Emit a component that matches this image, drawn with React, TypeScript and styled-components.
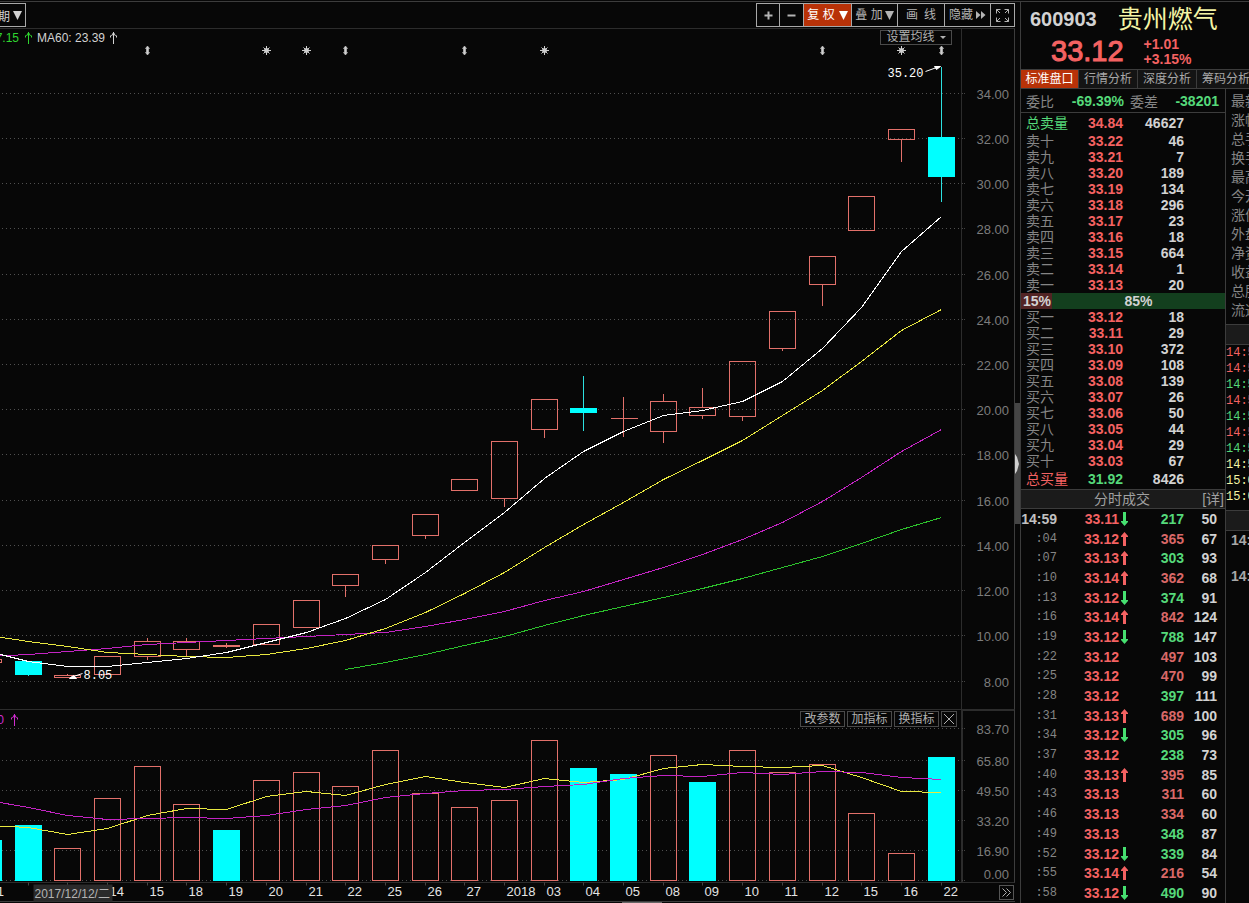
import React from "react";
import styled, { createGlobalStyle } from "styled-components";

const C = {
  bg: "#070707",
  line: "#3c3c3c",
  faint: "#2c2c2c",
  frame: "#a8a8a8",
  red: "#f46262",
  redSoft: "#d96868",
  candle: "#e2706a",
  green: "#55d97a",
  cyan: "#00ffff",
  label: "#858585",
  white: "#d2d2d2",
  accent: "#b83208",
  strip: "#1b1b1b",
};

const SANS = `"Liberation Sans", "Noto Sans CJK SC", sans-serif`;
const MONO = `"Liberation Mono", "Noto Sans CJK SC", monospace`;

const GlobalStyle = createGlobalStyle`
  * { box-sizing: border-box; }
  body { margin: 0; background: ${C.bg}; color: ${C.white}; font-family: ${SANS}; font-size: 12px; overflow-x: hidden; }
  button { font: inherit; color: inherit; background: none; border: 0; padding: 0; margin: 0; cursor: pointer; white-space: nowrap; }
  svg { display: block; flex: none; }
`;

/* ---------- page frame ---------- */

const Page = styled.div`
  display: flex;
  min-height: 100vh;
  padding-top: 1px;
  overflow: hidden;
`;

const Main = styled.main`
  flex: 1;
  min-width: 0;
  display: flex;
  flex-direction: column;
  border-top: 1px solid ${C.line};
`;

const Splitter = styled.div`
  flex: 0 0 5px;
  display: flex;
  flex-direction: column;
  justify-content: center;
  border-top: 1px solid ${C.line};
  padding-bottom: 8px;
  padding-top: 30px;
`;

const SplitterThumb = styled.div`
  height: 121px;
  display: flex;
  align-items: center;
  background: #454545;
`;

const Panel = styled.aside`
  flex: 0 0 229px;
  overflow: hidden;
  border-left: 1px solid ${C.line};
  border-top: 1px solid ${C.line};
`;

/* ---------- toolbar ---------- */

const Toolbar = styled.header`
  display: flex;
  justify-content: space-between;
  height: 27px;
  padding-top: 1px;
  border-bottom: 1px solid ${C.faint};
`;

const PeriodButton = styled.button`
  display: flex;
  align-items: center;
  justify-content: flex-end;
  gap: 3px;
  width: 26px;
  height: 24px;
  padding-right: 3px;
  overflow: hidden;
  border: 1px solid ${C.frame};
  border-left: 0;
`;

const ToolGroup = styled.div`
  display: flex;
  height: 24px;
  border: 1px solid ${C.frame};
`;

const ToolButton = styled.button<{ $w: number; $active?: boolean; $gap?: number }>`
  display: flex;
  align-items: center;
  justify-content: center;
  gap: ${(p) => p.$gap ?? 2}px;
  width: ${(p) => p.$w}px;
  line-height: 22px;
  color: ${(p) => (p.$active ? "#fff" : "#b4b4b4")};
  background: ${(p) => (p.$active ? C.accent : "transparent")};
  & + & { border-left: 1px solid ${C.frame}; }
`;

/* ---------- chart sections ---------- */

const Section = styled.section`
  display: flex;
  border-right: 1px solid ${C.line};
  border-bottom: 1px solid ${C.faint};
`;

const Plot = styled.div`
  flex: 1;
  min-width: 0;
`;

const Axis = styled.div<{ $boxed?: boolean }>`
  flex: 0 0 53px;
  border-left: 1px solid ${C.faint};
  ${(p) => p.$boxed && `box-shadow: inset 0 1px ${C.faint}, inset 1px 0 ${C.faint};`}
`;

const LegendRow = styled.div<{ $h: number; $end: number }>`
  display: flex;
  align-items: center;
  justify-content: space-between;
  height: ${(p) => p.$h}px;
  padding-right: ${(p) => p.$end}px;
`;

const Legend = styled.div`
  display: flex;
  align-items: center;
  gap: 5px;
  padding-top: 2px;
  line-height: 14px;
  white-space: nowrap;
`;

const ClippedValue = styled.span<{ $w: number; $pad: number; $color: string }>`
  display: flex;
  justify-content: flex-end;
  width: ${(p) => p.$w}px;
  padding-right: ${(p) => p.$pad}px;
  overflow: hidden;
  color: ${(p) => p.$color};
`;

const SmallButtons = styled.div`
  display: flex;
  gap: 2px;
`;

const SmallButton = styled.button<{ $w: number; $h: number }>`
  display: flex;
  align-items: center;
  justify-content: center;
  gap: 5px;
  width: ${(p) => p.$w}px;
  height: ${(p) => p.$h}px;
  line-height: 13px;
  color: #b0b0b0;
  border: 1px solid #4a4a4a;
`;

const ChartSvg = styled.svg`
  width: 100%;
  overflow: hidden;
`;

const DateBar = styled.div`
  display: flex;
  align-items: center;
  height: 19px;
  padding-right: 1px;
  border-bottom: 1px solid ${C.line};
`;

// The end padding keeps the dates under the plot, clear of the price axis.
const DateStrip = styled.div`
  flex: 1;
  min-width: 0;
  padding-right: 38px;
`;

const DateSvg = styled(ChartSvg)`
  overflow: visible;
`;

const MoreButton = styled.button`
  display: flex;
  align-items: center;
  justify-content: center;
  width: 15px;
  height: 15px;
  border: 1px solid #555;
`;

const ScrollTrack = styled.div`
  display: flex;
  justify-content: flex-end;
  height: 1px;
  padding-right: 353px;
`;

const ScrollThumb = styled.div`
  width: 40px;
  background: #666;
`;

/* ---------- quote panel ---------- */

const QuoteHead = styled.div`
  height: 67px;
  padding: 2px 8px 0 9px;
`;

const TitleLine = styled.div`
  display: flex;
  align-items: center;
  gap: 21px;
  height: 30px;
`;

const Code = styled.span`
  font-size: 20px;
  font-weight: bold;
  line-height: 30px;
`;

const StockName = styled.h1`
  margin: 0;
  font-size: 25px;
  font-weight: normal;
  line-height: 30px;
  color: #f4f4a4;
  white-space: nowrap;
`;

const PriceLine = styled.div`
  display: flex;
  align-items: center;
  gap: 20px;
  padding-left: 21px;
  height: 34px;
  color: ${C.red};
`;

const Price = styled.strong`
  font-size: 29px;
  font-weight: normal;
  line-height: 34px;
  -webkit-text-stroke: 1px ${C.red};
`;

const Change = styled.div`
  font-size: 14px;
  font-weight: bold;
  line-height: 15px;
  padding-top: 2px;
`;

const Tabs = styled.nav`
  display: flex;
  height: 20px;
  border-top: 1px solid ${C.line};
  border-bottom: 1px solid ${C.line};
`;

const Tab = styled.button<{ $active?: boolean }>`
  flex: 0 0 59px;
  line-height: 18px;
  color: ${(p) => (p.$active ? "#fff" : "#a8a8a8")};
  background: ${(p) => (p.$active ? C.accent : "#141414")};
  border-right: 1px solid ${C.line};
  &:first-child { flex-basis: 58px; }
`;

const PanelBody = styled.div`
  display: flex;
`;

const Book = styled.div`
  flex: 0 0 205px;
  border-right: 1px solid ${C.line};
`;

const RatioLine = styled.div`
  display: grid;
  grid-template-columns: 39px 59px 41px 1fr;
  align-items: center;
  height: 24px;
  padding: 0 6px 0 5px;
  font-size: 14px;
  color: ${C.label};
  border-bottom: 1px solid ${C.line};
`;

const RatioValue = styled.span`
  font-weight: bold;
  text-align: right;
  color: ${C.green};
  & + span { padding-left: 6px; }
`;

const DataTable = styled.table`
  width: 100%;
  table-layout: fixed;
  border-collapse: collapse;
  font-size: 14px;
  line-height: 16px;
  td, th { padding: 0; overflow: visible; white-space: nowrap; }
`;

const LevelRow = styled.tr<{ $total?: boolean }>`
  height: ${(p) => (p.$total ? 20 : 16)}px;
`;

const LevelName = styled.th<{ $color?: string }>`
  font-weight: normal;
  text-align: left;
  text-indent: 5px;
  color: ${(p) => p.$color ?? C.label};
`;

const Num = styled.td<{ $color?: string }>`
  font-weight: bold;
  text-align: right;
  color: ${(p) => p.$color ?? C.white};
`;

const RatioBar = styled.div`
  display: grid;
  grid-template-columns: 31px 1fr;
  height: 16px;
  font-size: 14px;
  font-weight: bold;
  line-height: 16px;
`;

const SellShare = styled.div`
  padding-left: 2px;
  background: #522424;
`;

const BuyShare = styled.div`
  text-align: center;
  background: #133f1e;
`;

const StripHead = styled.div`
  display: grid;
  grid-template-columns: 1fr 58px 1fr;
  height: 20px;
  font-size: 14px;
  line-height: 18px;
  color: #a0a0a0;
  background: ${C.strip};
  border-top: 1px solid ${C.line};
  border-bottom: 1px solid ${C.line};
`;

const DetailButton = styled.button`
  justify-self: end;
  padding-right: 1px;
`;

const TradeTable = styled(DataTable)`
  height: 394px;
`;

const TimeCell = styled.td<{ $full?: boolean }>`
  text-align: right;
  font-family: ${(p) => (p.$full ? SANS : MONO)};
  font-size: ${(p) => (p.$full ? 14 : 12)}px;
  font-weight: ${(p) => (p.$full ? "bold" : "normal")};
  color: ${(p) => (p.$full ? "#c0c0c0" : "#858585")};
`;

const ArrowCell = styled.td`
  svg { margin-left: 2px; }
`;

const SideColumn = styled.div`
  flex: 1;
  min-width: 0;
  overflow: hidden;
  white-space: nowrap;
`;

const InfoList = styled.ul`
  list-style: none;
  margin: 0;
  padding: 3px 0 4px 5px;
  font-size: 14px;
  line-height: 19px;
  color: ${C.label};
`;

const SideStrip = styled.div`
  height: 21px;
  background: ${C.strip};
  border-top: 1px solid ${C.line};
  border-bottom: 1px solid ${C.line};
`;

const TickTimes = styled.ul`
  list-style: none;
  margin: 0;
  padding: 0 0 5px;
  font-family: ${MONO};
  font-size: 12px;
  line-height: 16px;
`;

const TickTime = styled.li<{ $color: string }>`
  color: ${(p) => p.$color};
`;

const NewsTimes = styled.ul`
  list-style: none;
  margin: 0;
  padding-left: 5px;
  font-size: 14px;
  font-weight: bold;
  line-height: 18px;
  color: #a8a8a8;
  li + li { margin-top: 18px; }
`;

/* ---------- icons ---------- */

const Caret = ({ size = 9 }: { size?: number }) => (
  <svg width={size} height={size} viewBox="0 0 9 9" aria-hidden="true">
    <path d="M0 0h9L4.5 9z" fill="currentColor" />
  </svg>
);

const SmallCaret = () => (
  <svg width="6" height="3" viewBox="0 0 6 3" aria-hidden="true">
    <path d="M0 0h6L3 3z" fill="currentColor" />
  </svg>
);

const ThinArrow = ({ color }: { color: string }) => (
  <svg width="7" height="12" viewBox="0 0 7 12" stroke={color} fill="none" aria-hidden="true">
    <path d="M3.5 0V12M3.5 .5L1.5 4M3.5 .5L5.5 4M.5 3.5v2M6.5 3.5v2" />
  </svg>
);

const PlusIcon = () => (
  <svg width="9" height="9" viewBox="0 0 9 9" stroke="currentColor" strokeWidth="2" aria-hidden="true">
    <path d="M4.5 0.5v8M0.5 4.5h8" />
  </svg>
);

const MinusIcon = () => (
  <svg width="9" height="9" viewBox="0 0 9 9" stroke="currentColor" strokeWidth="2" aria-hidden="true">
    <path d="M0.5 4.5h8" />
  </svg>
);

const FastForward = () => (
  <svg width="10" height="8" viewBox="0 0 10 8" fill="currentColor" aria-hidden="true">
    <path d="M0 0l4.5 4L0 8zM5 0l4.5 4L5 8z" />
  </svg>
);

const ExpandIcon = () => (
  <svg width="13" height="13" viewBox="0 0 13 13" stroke="currentColor" fill="none" aria-hidden="true">
    <path d="M4.5 .5H.5V4.5M.5 .5L4 4M8.5 .5h4V4.5M12.5 .5L9 4M4.5 12.5H.5V8.5M.5 12.5L4 9M8.5 12.5h4V8.5M12.5 12.5L9 9" />
  </svg>
);

const CloseIcon = () => (
  <svg width="10" height="10" viewBox="0 0 10 10" stroke="currentColor" aria-hidden="true">
    <path d="M0 0L10 10M10 0L0 10" />
  </svg>
);

const DoubleChevron = () => (
  <svg width="9" height="9" viewBox="0 0 9 9" stroke="#b0b0b0" fill="none" aria-hidden="true">
    <path d="M.5 .5l4 4-4 4M4.5 .5l4 4-4 4" />
  </svg>
);

const TradeArrow = ({ up }: { up: boolean }) => (
  <svg width="7" height="14" viewBox="0 0 7 14" fill={up ? C.red : "#46e070"} role="img" aria-label={up ? "up" : "down"}>
    <path d={up ? "M3.5 0L7 4v1H5v9H2V5H0V4z" : "M3.5 14L7 10V9H5V0H2v9H0v1z"} />
  </svg>
);

/* ---------- chart data ---------- */

const LATEST_X = 941;
const PLOT_W = 961;
const HALF = 13;

// x, open/close box top and bottom, wick high and low, falling day
type Candle = [number, number, number, number, number, boolean?];
const candles: Candle[] = [
  [-12, 659, 662, 659, 662],
  [28, 661, 674, 661, 675, true],
  [67, 675, 677, 673, 677],
  [107, 656, 674, 656, 674],
  [147, 641, 656, 637, 659],
  [186, 641, 649, 637, 655],
  [226, 645, 646, 642, 647],
  [266, 624, 644, 624, 644],
  [306, 600, 627, 600, 627],
  [345, 574, 585, 574, 596],
  [385, 545, 559, 545, 563],
  [425, 514, 535, 514, 538],
  [464, 479, 490, 479, 490],
  [504, 441, 498, 441, 506],
  [544, 399, 429, 399, 437],
  [583, 408, 412, 375, 430, true],
  [623, 418, 418, 396, 436],
  [663, 401, 431, 393, 442],
  [702, 407, 415, 387, 418],
  [742, 361, 416, 361, 420],
  [782, 311, 348, 311, 350],
  [822, 256, 284, 256, 305],
  [861, 196, 230, 196, 230],
  [901, 129, 139, 129, 161],
  [LATEST_X, 137, 176, 66, 201, true],
];

const xs = candles.map((c) => c[0]);

const ma5 = [651, 661, 666, 666, 662, 658, 652, 642, 632, 618, 599, 572, 542, 512, 478, 451, 431, 415, 410, 401, 381, 348, 307, 251, 216];
const ma10 = [635, 641, 646, 652, 654, 656, 657, 654, 648, 640, 628, 612, 593, 572, 547, 524, 502, 479, 460, 440, 415, 390, 361, 330, 309];
const ma20 = [656, 654, 651, 648, 644, 642, 640, 638, 636, 634, 632, 626, 619, 611, 600, 591, 579, 567, 554, 539, 522, 501, 477, 451, 429];
const ma30 = [669, 662, 654, 645, 636, 625, 615, 606, 597, 588, 578, 567, 556, 543, 529, 517];

const volumeTops = [840, 825, 848, 798, 766, 804, 830, 780, 772, 786, 750, 793, 807, 800, 740, 768, 774, 755, 782, 750, 772, 764, 813, 853, 757];
const volumeDown = new Set([-12, 28, 226, 583, 623, 702, LATEST_X]);
const vol5 = [825, 827, 834, 828, 815, 808, 809, 796, 791, 795, 784, 776, 782, 787, 778, 782, 779, 768, 764, 766, 767, 765, 777, 791, 792];
const vol10 = [800, 807, 815, 819, 818, 817, 818, 815, 809, 805, 797, 793, 790, 789, 786, 784, 778, 775, 776, 772, 774, 771, 772, 777, 779];

const priceGrid: [number, string][] = [
  [93, "34.00"], [138, "32.00"], [183, "30.00"], [228, "28.00"], [274, "26.00"], [319, "24.00"], [364, "22.00"],
  [409, "20.00"], [454, "18.00"], [500, "16.00"], [545, "14.00"], [590, "12.00"], [635, "10.00"], [681, "8.00"],
];
const volumeGrid: [number, string][] = [[728, "83.70"], [760, "65.80"], [790, "49.50"], [820, "33.20"], [850, "16.90"], [880, "0.00"]];

// Empty where the selected-date box stands in for the label.
const dates = ["11", "", "", "14", "15", "18", "19", "20", "21", "22", "25", "26", "27", "2018", "03", "04", "05", "08", "09", "10", "11", "12", "15", "16", "22"];

const starMarks = [266, 306, 544, 901];
const splitMarks = [147, 345, 464, 822, LATEST_X];

const toPoints = (ys: number[]) => {
  const from = xs.length - ys.length;
  return ys.map((y, i) => `${xs[from + i]},${y}`).join(" ");
};

/* ---------- chart parts ---------- */

const Grid = ({ rows }: { rows: [number, string][] }) => (
  <g stroke="#505050" strokeDasharray="1 3" shapeRendering="crispEdges">
    {rows.map(([y]) => (
      <line key={y} x1="2" x2="100%" y1={y + 0.5} y2={y + 0.5} />
    ))}
  </g>
);

// Everything inside is measured from the right edge, so the latest day stays in view.
const Anchored = ({ children }: { children: React.ReactNode }) => (
  <svg x="100%" overflow="visible">
    <g transform={`translate(${-PLOT_W + 0.5} 0.5)`}>{children}</g>
  </svg>
);

const Trend = ({ ys, color }: { ys: number[]; color: string }) => (
  <polyline points={toPoints(ys)} fill="none" stroke={color} shapeRendering="crispEdges" />
);

const CandleShape = ({ c }: { c: Candle }) => {
  const [x, top, bottom, high, low, down] = c;
  return (
    <g stroke={down ? "#2ce0e0" : C.candle} shapeRendering="crispEdges">
      {high < top && <line x1={x} x2={x} y1={high} y2={top} />}
      {low > bottom && <line x1={x} x2={x} y1={bottom} y2={low} />}
      {top === bottom ? (
        <line x1={x - HALF} x2={x + HALF + 1} y1={top} y2={top} />
      ) : (
        <rect x={x - HALF} y={top} width={HALF * 2} height={bottom - top} fill={down ? C.cyan : "none"} stroke={down ? C.cyan : C.candle} />
      )}
    </g>
  );
};

const PriceChart = () => (
  <ChartSvg height="664" role="img" aria-label="K线图">
    <g transform="translate(0 -45)">
      <Grid rows={priceGrid} />
      <Anchored>
        {candles.map((c) => (
          <CandleShape key={c[0]} c={c} />
        ))}
        <Trend ys={ma20} color="#c424c4" />
        <Trend ys={ma30} color="#2cc22c" />
        <Trend ys={ma10} color="#e8e840" />
        <Trend ys={ma5} color="#ffffff" />
        <g stroke="#cfcfcf" fill="#cfcfcf">
          {starMarks.map((x) => (
            <g key={x} transform={`translate(${x} 50)`}>
              <circle r="2" />
              <path d="M-4.5 0h9M0-4.5v9M-3-3l6 6M3-3l-6 6" />
            </g>
          ))}
          {splitMarks.map((x) => (
            <path key={x} transform={`translate(${x} 50)`} d="M0-4.5L2-2H1V2H2L0 4.5L-2 2H-1V-2H-2z" strokeWidth=".6" />
          ))}
        </g>
        <g fontFamily="Liberation Mono, monospace" fontSize="12" fill="#fff">
          <text x="887" y="76">35.20</text>
          <text x="83" y="678">8.05</text>
        </g>
        <g stroke="#fff" fill="#fff">
          <path d="M925 71L939 66" />
          <path d="M940 66l-6 0l2 3z" />
          <path d="M82 673L70 677" />
          <path d="M69 678l4-3l3 3z" />
        </g>
      </Anchored>
    </g>
  </ChartSvg>
);

const VolumeChart = () => (
  <ChartSvg height="154" role="img" aria-label="成交量">
    <g transform="translate(0 -728)">
      <Grid rows={volumeGrid} />
      <Anchored>
        {xs.map((x, i) => {
          const down = volumeDown.has(x);
          return (
            <rect key={x} x={x - HALF} y={volumeTops[i]} width={HALF * 2} height={880 - volumeTops[i]}
              fill={down ? C.cyan : "none"} stroke={down ? C.cyan : C.candle} shapeRendering="crispEdges" />
          );
        })}
        <Trend ys={vol5} color="#e8e840" />
        <Trend ys={vol10} color="#c424c4" />
      </Anchored>
    </g>
  </ChartSvg>
);

const AxisLabels = ({ rows, top, height, last }: { rows: [number, string][]; top: number; height: number; last?: number }) => (
  <svg width="52" height={height} viewBox={`0 ${top} 52 ${height}`} fill="#7c7c7c" fontFamily="Liberation Sans, sans-serif" fontSize="13" textAnchor="end">
    {rows.map(([y, label], i) => (
      <g key={label}>
        <line x1="0" x2="3" y1={y + 0.5} y2={y + 0.5} stroke="#444" strokeDasharray="1 1" />
        <text x="47" y={last && i === rows.length - 1 ? last : y + 6}>{label}</text>
      </g>
    ))}
  </svg>
);

const DateLabels = () => (
  <DateSvg height="18">
    <g transform="translate(0 -883)">
      <Anchored>
        <g fill="#e4e4e4" fontFamily="Liberation Sans, sans-serif" fontSize="13">
          {xs.map((x, i) => dates[i] && <text key={x} x={x + 2} y="895">{dates[i]}</text>)}
        </g>
        <g stroke="#444">
          {xs.map((x) => (
            <line key={x} x1={x} x2={x} y1="882" y2="885" />
          ))}
        </g>
        <rect x="33" y="884" width="79" height="17" fill="#2a2a2a" />
        <text x="34" y="897" fontFamily="Liberation Sans, Noto Sans CJK SC, sans-serif" fontSize="12" fill="#b4b4b4">2017/12/12/二</text>
      </Anchored>
    </g>
  </DateSvg>
);

/* ---------- panel data ---------- */

const sells: [string, string, string][] = [
  ["卖十", "33.22", "46"], ["卖九", "33.21", "7"], ["卖八", "33.20", "189"], ["卖七", "33.19", "134"], ["卖六", "33.18", "296"],
  ["卖五", "33.17", "23"], ["卖四", "33.16", "18"], ["卖三", "33.15", "664"], ["卖二", "33.14", "1"], ["卖一", "33.13", "20"],
];
const buys: [string, string, string][] = [
  ["买一", "33.12", "18"], ["买二", "33.11", "29"], ["买三", "33.10", "372"], ["买四", "33.09", "108"], ["买五", "33.08", "139"],
  ["买六", "33.07", "26"], ["买七", "33.06", "50"], ["买八", "33.05", "44"], ["买九", "33.04", "29"], ["买十", "33.03", "67"],
];

type Dir = "up" | "down" | "";
const trades: [string, string, Dir, string, "r" | "g", string][] = [
  ["14:59", "33.11", "down", "217", "g", "50"],
  [":04", "33.12", "up", "365", "r", "67"],
  [":07", "33.13", "up", "303", "g", "93"],
  [":10", "33.14", "up", "362", "r", "68"],
  [":13", "33.12", "down", "374", "g", "91"],
  [":16", "33.14", "up", "842", "r", "124"],
  [":19", "33.12", "down", "788", "g", "147"],
  [":22", "33.12", "", "497", "r", "103"],
  [":25", "33.12", "", "470", "r", "99"],
  [":28", "33.12", "", "397", "g", "111"],
  [":31", "33.13", "up", "689", "r", "100"],
  [":34", "33.12", "down", "305", "g", "96"],
  [":37", "33.12", "", "238", "g", "73"],
  [":40", "33.13", "up", "395", "r", "85"],
  [":43", "33.13", "", "311", "r", "60"],
  [":46", "33.13", "", "334", "r", "60"],
  [":49", "33.13", "", "348", "g", "87"],
  [":52", "33.12", "down", "339", "g", "84"],
  [":55", "33.14", "up", "216", "r", "54"],
  [":58", "33.12", "down", "490", "g", "90"],
];

const infoLabels = ["最新", "涨幅", "总手", "换手", "最高", "今开", "涨停", "外盘", "净资", "收益", "总股", "流通"];
const PALE = "#f4f4a4";
const ticks: [string, string][] = [
  ["14:56", C.red], ["14:56", C.red], ["14:56", C.green], ["14:56", C.red], ["14:56", C.green],
  ["14:56", C.red], ["14:56", C.green], ["14:56", PALE], ["15:00", PALE], ["15:00", PALE],
];

const Levels = ({ rows, total, totalFirst }: { rows: [string, string, string][]; total: React.ReactNode; totalFirst?: boolean }) => (
  <DataTable>
    <colgroup>
      <col width="50" />
      <col width="52" />
      <col width="61" />
      <col />
    </colgroup>
    <tbody>
      {totalFirst && total}
      {rows.map(([name, price, volume]) => (
        <LevelRow key={name}>
          <LevelName scope="row">{name}</LevelName>
          <Num $color={C.red}>{price}</Num>
          <Num>{volume}</Num>
          <td />
        </LevelRow>
      ))}
      {!totalFirst && total}
    </tbody>
  </DataTable>
);

const Total = ({ name, price, volume, nameColor, priceColor }: { name: string; price: string; volume: string; nameColor: string; priceColor: string }) => (
  <LevelRow $total>
    <LevelName scope="row" $color={nameColor}>{name}</LevelName>
    <Num $color={priceColor}>{price}</Num>
    <Num>{volume}</Num>
    <td />
  </LevelRow>
);

/* ---------- app ---------- */

export default function App() {
  return (
    <>
      <GlobalStyle />
      <Page>
        <Main>
          <Toolbar>
            <PeriodButton>周期 <Caret /></PeriodButton>
            <ToolGroup>
              <ToolButton $w={22} aria-label="放大"><PlusIcon /></ToolButton>
              <ToolButton $w={24} aria-label="缩小"><MinusIcon /></ToolButton>
              <ToolButton $w={48} $active $gap={4}>复 权 <Caret /></ToolButton>
              <ToolButton $w={46}>叠 加 <Caret /></ToolButton>
              <ToolButton $w={47}>画&ensp;线</ToolButton>
              <ToolButton $w={46} $gap={3}>隐藏 <FastForward /></ToolButton>
              <ToolButton $w={24} aria-label="全屏"><ExpandIcon /></ToolButton>
            </ToolGroup>
          </Toolbar>

          <Section>
            <Plot>
              <LegendRow $h={16} $end={9}>
                <Legend>
                  <ClippedValue $w={20} $pad={1} $color="#2fd62f">17.15</ClippedValue>
                  <ThinArrow color="#2fd62f" />
                  <span>MA60: 23.39</span>
                  <ThinArrow color={C.white} />
                </Legend>
                <SmallButton $w={72} $h={15}>设置均线 <SmallCaret /></SmallButton>
              </LegendRow>
              <PriceChart />
            </Plot>
            <Axis>
              <AxisLabels rows={priceGrid} top={29} height={680} />
            </Axis>
          </Section>

          <Section>
            <Plot>
              <LegendRow $h={18} $end={4}>
                <Legend>
                  <ClippedValue $w={6} $pad={2} $color="#d02cd0">00</ClippedValue>
                  <ThinArrow color="#d02cd0" />
                </Legend>
                <SmallButtons>
                  <SmallButton $w={45} $h={16}>改参数</SmallButton>
                  <SmallButton $w={45} $h={16}>加指标</SmallButton>
                  <SmallButton $w={45} $h={16}>换指标</SmallButton>
                  <SmallButton $w={16} $h={16} aria-label="关闭"><CloseIcon /></SmallButton>
                </SmallButtons>
              </LegendRow>
              <VolumeChart />
            </Plot>
            <Axis $boxed>
              <AxisLabels rows={volumeGrid} top={710} height={172} last={879} />
            </Axis>
          </Section>

          <DateBar>
            <DateStrip>
              <DateLabels />
            </DateStrip>
            <MoreButton aria-label="更多"><DoubleChevron /></MoreButton>
          </DateBar>
          <ScrollTrack><ScrollThumb /></ScrollTrack>
        </Main>

        <Splitter>
          <SplitterThumb>
            <svg width="4" height="20" viewBox="0 0 4 20" aria-hidden="true">
              <path d="M0 0L2 3L4 10L2 17L0 20z" fill="#d0d0d0" />
            </svg>
          </SplitterThumb>
        </Splitter>

        <Panel>
          <QuoteHead>
            <TitleLine>
              <Code>600903</Code>
              <StockName>贵州燃气</StockName>
            </TitleLine>
            <PriceLine>
              <Price>33.12</Price>
              <Change>
                <div>+1.01</div>
                <div>+3.15%</div>
              </Change>
            </PriceLine>
          </QuoteHead>
          <Tabs>
            <Tab $active>标准盘口</Tab>
            <Tab>行情分析</Tab>
            <Tab>深度分析</Tab>
            <Tab>筹码分析</Tab>
          </Tabs>
          <PanelBody>
            <Book>
              <RatioLine>
                <span>委比</span>
                <RatioValue>-69.39%</RatioValue>
                <span>委差</span>
                <RatioValue>-38201</RatioValue>
              </RatioLine>
              <Levels
                rows={sells}
                totalFirst
                total={<Total name="总卖量" price="34.84" volume="46627" nameColor={C.green} priceColor={C.red} />}
              />
              <RatioBar>
                <SellShare>15%</SellShare>
                <BuyShare>85%</BuyShare>
              </RatioBar>
              <Levels
                rows={buys}
                total={<Total name="总买量" price="31.92" volume="8426" nameColor={C.red} priceColor={C.green} />}
              />
              <StripHead>
                <span />
                <span>分时成交</span>
                <DetailButton>[详]</DetailButton>
              </StripHead>
              <TradeTable>
                <colgroup>
                  <col width="36" />
                  <col width="62" />
                  <col width="12" />
                  <col width="53" />
                  <col width="33" />
                  <col />
                </colgroup>
                <tbody>
                  {trades.map(([time, price, dir, volume, tone, count]) => (
                    <tr key={time}>
                      <TimeCell $full={time.length > 3}>{time}</TimeCell>
                      <Num $color={C.red}>{price}</Num>
                      <ArrowCell>{dir && <TradeArrow up={dir === "up"} />}</ArrowCell>
                      <Num $color={tone === "r" ? C.redSoft : C.green}>{volume}</Num>
                      <Num>{count}</Num>
                      <td />
                    </tr>
                  ))}
                </tbody>
              </TradeTable>
            </Book>
            <SideColumn>
              <InfoList>
                {infoLabels.map((t) => (
                  <li key={t}>{t}</li>
                ))}
              </InfoList>
              <SideStrip />
              <TickTimes>
                {ticks.map(([t, color], i) => (
                  <TickTime key={i} $color={color}>{t}</TickTime>
                ))}
              </TickTimes>
              <SideStrip />
              <NewsTimes>
                <li>14:30</li>
                <li>14:30</li>
              </NewsTimes>
            </SideColumn>
          </PanelBody>
        </Panel>
      </Page>
    </>
  );
}
